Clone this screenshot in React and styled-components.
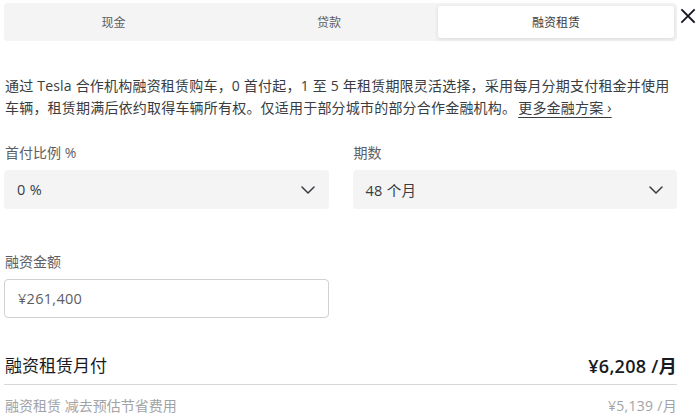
import React from "react";
import styled, { createGlobalStyle } from "styled-components";

const Global = createGlobalStyle`
  html, body { margin: 0; padding: 0; background: #fff; }
  body { font-family: "Open Sans", "Noto Sans CJK SC", sans-serif; }
`;

const Page = styled.div`
  position: relative;
  width: 700px;
  height: 420px;
  overflow: hidden;
  box-sizing: border-box;
  padding: 3px 23px 0 4px;
`;

const TabBar = styled.div`
  display: grid;
  grid-template-columns: 213px 218px 1fr;
  height: 38px;
  box-sizing: border-box;
  padding: 3px;
  background: #f4f4f4;
  border-radius: 4px;
`;

const Tab = styled.div`
  display: flex;
  align-items: center;
  justify-content: center;
  font-size: 12px;
  color: ${(p) => (p.$active ? "#393c41" : "#5c5e62")};
  background: ${(p) => (p.$active ? "#fff" : "transparent")};
  border-radius: 3px;
  box-shadow: ${(p) => (p.$active ? "0 1px 4px rgba(0,0,0,0.12)" : "none")};
`;

const Close = styled.button`
  position: absolute;
  top: 6px;
  right: 2px;
  width: 20px;
  height: 20px;
  padding: 0;
  border: none;
  background: none;
  display: flex;
  align-items: center;
  justify-content: center;
`;

const Para = styled.p`
  margin: 34px 0 0 1px;
  font-size: 14px;
  line-height: 22px;
  letter-spacing: 0.2px;
  color: #393c41;
`;

const Link = styled.a`
  color: #393c41;
  text-decoration: underline;
  text-underline-offset: 4px;
  text-decoration-thickness: 1px;
  margin-left: 2px;
`;

const Row = styled.div`
  display: grid;
  grid-template-columns: 1fr 1fr;
  column-gap: 24px;
  margin-top: ${(p) => p.$mt}px;
`;

const Field = styled.div`
  display: flex;
  flex-direction: column;
`;

const Label = styled.div`
  font-size: 14px;
  line-height: 20px;
  color: #5c5e62;
  margin-left: 1px;
  margin-bottom: 7px;
`;

const Select = styled.div`
  height: 39px;
  box-sizing: border-box;
  background: #f4f4f4;
  border-radius: 4px;
  display: flex;
  align-items: center;
  justify-content: space-between;
  padding: 0 14px 0 13px;
  font-size: 14.5px;
  letter-spacing: 0.3px;
  color: #393c41;
`;

const Input = styled.div`
  height: 39px;
  box-sizing: border-box;
  background: #fff;
  border: 1px solid #d0d1d2;
  border-radius: 4px;
  display: flex;
  align-items: center;
  padding: 0 13px;
  font-size: 14.5px;
  letter-spacing: 0.3px;
  color: #5c5e62;
`;

const Summary = styled.div`
  display: flex;
  justify-content: space-between;
  align-items: center;
  margin-top: 36px;
  padding: 0 0 6px 1px;
  border-bottom: 1px solid #d8d8d8;
  font-size: 17px;
  line-height: 24px;
  color: #171a20;
`;

const Price = styled.span`
  font-size: 18px;
  font-weight: 600;
  letter-spacing: 0.3px;
`;

const Sub = styled.div`
  display: flex;
  justify-content: space-between;
  margin-top: 11px;
  padding-left: 1px;
  font-size: 14px;
  line-height: 20px;
  color: #a2a3a5;
`;

const SubPrice = styled.span`
  letter-spacing: 0.3px;
`;

const Chevron = () => (
  <svg width="14" height="8" viewBox="0 0 14 8" fill="none">
    <path d="M1 1l6 6 6-6" stroke="#393c41" strokeWidth="1.5" strokeLinecap="round" strokeLinejoin="round" />
  </svg>
);

export default function App() {
  return (
    <>
      <Global />
      <Page>
        <TabBar>
          <Tab>现金</Tab>
          <Tab>贷款</Tab>
          <Tab $active>融资租赁</Tab>
        </TabBar>
        <Close aria-label="关闭">
          <svg width="16" height="16" viewBox="0 0 16 16">
            <path d="M2 2l12 12M14 2L2 14" stroke="#171a20" strokeWidth="1.8" strokeLinecap="square" />
          </svg>
        </Close>
        <Para>
          通过 Tesla 合作机构融资租赁购车，0 首付起，1 至 5 年租赁期限灵活选择，采用每月分期支付租金并使用车辆，租赁期满后依约取得车辆所有权。仅适用于部分城市的部分合作金融机构。
          <Link>更多金融方案 ›</Link>
        </Para>
        <Row $mt={24}>
          <Field>
            <Label>首付比例 %</Label>
            <Select>
              <span>0 %</span>
              <Chevron />
            </Select>
          </Field>
          <Field>
            <Label>期数</Label>
            <Select>
              <span>48 个月</span>
              <Chevron />
            </Select>
          </Field>
        </Row>
        <Row $mt={43}>
          <Field>
            <Label>融资金额</Label>
            <Input>¥261,400</Input>
          </Field>
        </Row>
        <Summary>
          <span>融资租赁月付</span>
          <Price>¥6,208 /月</Price>
        </Summary>
        <Sub>
          <span>融资租赁 减去预估节省费用</span>
          <SubPrice>¥5,139 /月</SubPrice>
        </Sub>
      </Page>
    </>
  );
}
